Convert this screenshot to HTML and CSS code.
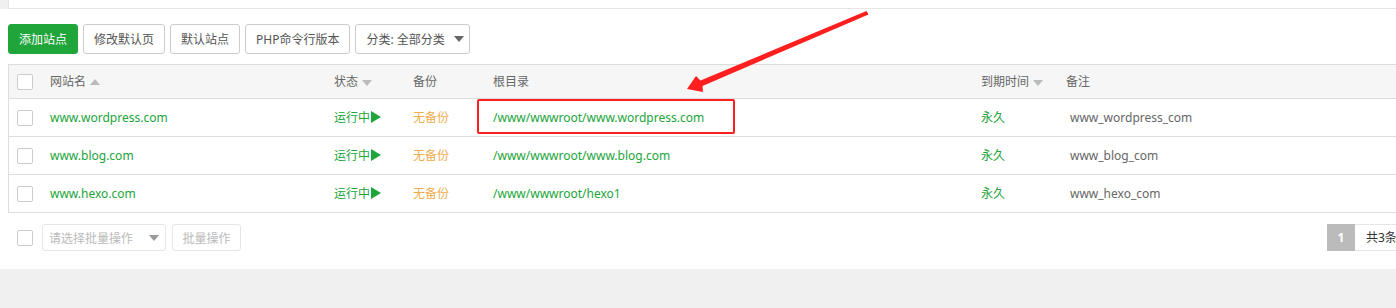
FILE: index.html
```html
<!DOCTYPE html>
<html lang="zh-CN">
<head>
    <meta charset="UTF-8">
    <title>网站</title>
    <link rel="stylesheet" href="styles.css">
</head>
<body>
    <div class="top-box"></div>

    <div class="main">
        <div class="toolbar">
            <button class="btn btn-success">添加站点</button>
            <button class="btn">修改默认页</button>
            <button class="btn">默认站点</button>
            <button class="btn">PHP命令行版本</button>
            <div class="select sort-select">分类: 全部分类<span class="caret dark"></span></div>
        </div>

        <div class="table-wrap">
            <table class="site-table">
                <colgroup>
                    <col style="width:33px">
                    <col style="width:284px">
                    <col style="width:79px">
                    <col style="width:80px">
                    <col style="width:488px">
                    <col style="width:85px">
                    <col>
                </colgroup>
                <thead>
                    <tr>
                        <th><span class="check"></span></th>
                        <th>网站名 <span class="sort up"></span></th>
                        <th>状态 <span class="sort"></span></th>
                        <th>备份</th>
                        <th>根目录</th>
                        <th>到期时间 <span class="sort"></span></th>
                        <th>备注</th>
                    </tr>
                </thead>
                <tbody>
                    <tr>
                        <td><span class="check"></span></td>
                        <td class="green">www.wordpress.com</td>
                        <td class="green">运行中<span class="play"></span></td>
                        <td class="orange">无备份</td>
                        <td class="green">/www/wwwroot/www.wordpress.com</td>
                        <td class="green">永久</td>
                        <td class="note">www_wordpress_com</td>
                    </tr>
                    <tr>
                        <td><span class="check"></span></td>
                        <td class="green">www.blog.com</td>
                        <td class="green">运行中<span class="play"></span></td>
                        <td class="orange">无备份</td>
                        <td class="green">/www/wwwroot/www.blog.com</td>
                        <td class="green">永久</td>
                        <td class="note">www_blog_com</td>
                    </tr>
                    <tr>
                        <td><span class="check"></span></td>
                        <td class="green">www.hexo.com</td>
                        <td class="green">运行中<span class="play"></span></td>
                        <td class="orange">无备份</td>
                        <td class="green">/www/wwwroot/hexo1</td>
                        <td class="green">永久</td>
                        <td class="note">www_hexo_com</td>
                    </tr>
                </tbody>
            </table>
        </div>

        <div class="footer">
            <div class="batch">
                <span class="check"></span>
                <div class="select batch-select">请选择批量操作<span class="caret"></span></div>
                <button class="btn btn-muted">批量操作</button>
            </div>
            <div class="pager">
                <span class="page-cur">1</span>
                <span class="page-total">共3条数据</span>
            </div>
        </div>
    </div>

    <!-- 标注 -->
    <div class="mark-box"></div>
    <svg class="mark-arrow" width="1396" height="120" viewBox="0 0 1396 120">
        <polygon points="687,89 696,76 700.5,80.5 866.5,11 868.5,14.5 702.5,86 703,92" fill="#ff1f1f"/>
    </svg>
</body>
</html>
```

FILE: styles.css
```css
* {
    margin: 0;
    padding: 0;
    box-sizing: border-box;
}

body {
    background: #f0f0f0;
    font-family: "Noto Sans", "Noto Sans CJK SC", sans-serif;
    font-size: 12px;
    color: #333;
    position: relative;
    overflow: hidden;
    height: 308px;
}

.top-box {
    margin-left: 8px;
    height: 9px;
    background: #fff;
    border-left: 1px solid #e6e6e6;
    border-bottom: 1px solid #e6e6e6;
}

.main {
    background: #fff;
    padding: 15px 0 18px 8px;
    overflow: hidden;
}

.toolbar {
    display: flex;
    gap: 5px;
    height: 30px;
    margin-bottom: 10px;
}

.btn {
    height: 30px;
    padding: 0 10px;
    font-family: inherit;
    font-size: 12px;
    color: #555;
    background: #fff;
    border: 1px solid #ccc;
    border-radius: 3px;
}

.btn-success {
    background: #20a53a;
    border-color: #20a53a;
    color: #fff;
}

.select {
    position: relative;
    display: flex;
    align-items: center;
    border: 1px solid #ccc;
    border-radius: 3px;
    color: #555;
}

.sort-select {
    width: 115px;
    height: 30px;
    padding-left: 10px;
}

.caret {
    position: absolute;
    right: 6px;
    top: 50%;
    margin-top: -3px;
    border-left: 5px solid transparent;
    border-right: 5px solid transparent;
    border-top: 6px solid #999;
}

.caret.dark {
    right: 5px;
    border-top-color: #666;
}

.table-wrap {
    width: 1420px;
    border: 1px solid #ddd;
}

.site-table {
    width: 100%;
    border-collapse: collapse;
    table-layout: fixed;
}

.site-table th {
    height: 33px;
    background: #f6f6f6;
    color: #666;
    font-weight: normal;
    text-align: left;
    padding-left: 8px;
    border-bottom: 1px solid #ddd;
}

.site-table td {
    height: 38px;
    padding-left: 8px;
    border-bottom: 1px solid #ddd;
    white-space: nowrap;
}

.site-table tr:last-child td {
    border-bottom: none;
}

.check {
    display: inline-block;
    width: 16px;
    height: 16px;
    border: 1px solid #ccc;
    border-radius: 2px;
    background: #fff;
    vertical-align: middle;
}

.sort {
    display: inline-block;
    margin-left: 1px;
    vertical-align: middle;
    border-left: 5px solid transparent;
    border-right: 5px solid transparent;
    border-top: 6px solid #bbb;
}

.sort.up {
    border-top: none;
    border-bottom: 6px solid #bbb;
    margin-top: -3px;
}

.green {
    color: #20a53a;
}

.orange {
    color: #f0ad4e;
}

.note {
    color: #666;
}

.site-table td.note {
    padding-left: 12px;
}

.play {
    display: inline-block;
    margin-left: 1px;
    vertical-align: -1px;
    border-top: 6px solid transparent;
    border-bottom: 6px solid transparent;
    border-left: 10px solid #20a53a;
}

.footer {
    display: flex;
    justify-content: space-between;
    width: 1420px;
    margin-top: 11px;
    height: 27px;
}

.batch {
    display: flex;
    align-items: center;
    gap: 6px;
    padding-left: 9px;
}

.batch .check {
    margin-right: 3px;
}

.batch-select {
    width: 124px;
    height: 27px;
    padding-left: 6px;
    border-color: #e6e6e6;
    color: #bbb;
}

.btn-muted {
    height: 27px;
    width: 69px;
    padding: 0;
    border-color: #e6e6e6;
    color: #bbb;
}

.pager {
    display: flex;
    width: 101px;
}

.page-cur {
    width: 28px;
    height: 27px;
    line-height: 27px;
    text-align: center;
    background: #bbb;
    color: #fff;
    font-weight: bold;
}

.page-total {
    flex: 1;
    height: 27px;
    line-height: 25px;
    padding: 0 11px;
    border: 1px solid #e6e6e6;
    border-left: none;
    white-space: nowrap;
    overflow: hidden;
    color: #333;
}

.mark-box {
    position: absolute;
    left: 477px;
    top: 99px;
    width: 258px;
    height: 35px;
    border: 2px solid #ff1f1f;
    border-radius: 2px;
}

.mark-arrow {
    position: absolute;
    left: 0;
    top: 0;
}
```
